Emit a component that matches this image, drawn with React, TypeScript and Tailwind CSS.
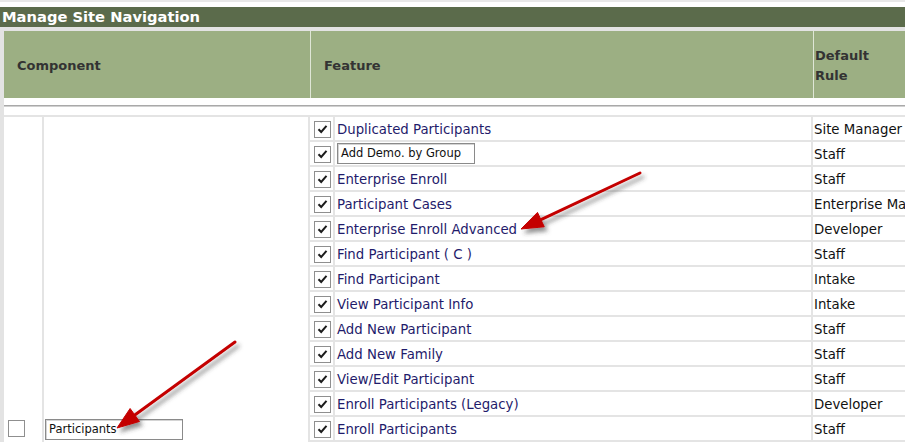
import React from 'react';

type Feature = {
  name: string;
  rule: string;
  editable?: boolean;
};

const features: Feature[] = [
  { name: 'Duplicated Participants', rule: 'Site Manager' },
  { name: 'Add Demo. by Group', rule: 'Staff', editable: true },
  { name: 'Enterprise Enroll', rule: 'Staff' },
  { name: 'Participant Cases', rule: 'Enterprise Manager' },
  { name: 'Enterprise Enroll Advanced', rule: 'Developer' },
  { name: 'Find Participant ( C )', rule: 'Staff' },
  { name: 'Find Participant', rule: 'Intake' },
  { name: 'View Participant Info', rule: 'Intake' },
  { name: 'Add New Participant', rule: 'Staff' },
  { name: 'Add New Family', rule: 'Staff' },
  { name: 'View/Edit Participant', rule: 'Staff' },
  { name: 'Enroll Participants (Legacy)', rule: 'Developer' },
  { name: 'Enroll Participants', rule: 'Staff' },
];

const CheckBox: React.FC<{ checked?: boolean }> = ({ checked }) => (
  <span className="flex h-[17px] w-[17px] shrink-0 items-center justify-center border border-[#8f8f8f] bg-white">
    {checked && (
      <svg width="11" height="10" viewBox="0 0 11 10">
        <path d="M1.5 5.2 L4.2 8 L9.5 1.8" fill="none" stroke="#1c1c1c" strokeWidth="2" />
      </svg>
    )}
  </span>
);

const TextBox: React.FC<{ value: string }> = ({ value }) => (
  <span className="flex h-[21px] w-[138px] shrink-0 items-center border border-[#8a8a8a] bg-white pl-[3px] text-[11.5px] text-[#111] shadow-[inset_1px_1px_0_#d4d4d4]">
    {value}
  </span>
);

// red call-out arrows with a soft shadow, drawn over the table
const Arrows: React.FC = () => (
  <svg className="pointer-events-none absolute left-0 top-0" width="905" height="444">
    <defs>
      <filter id="arrowShadow" x="-20%" y="-20%" width="140%" height="140%">
        <feDropShadow dx="3" dy="4" stdDeviation="2" floodColor="#3a3a3a" floodOpacity="0.55" />
      </filter>
    </defs>
    <g filter="url(#arrowShadow)" fill="#c40000" stroke="#c40000">
      <line x1="640" y1="173" x2="541" y2="219.6" strokeWidth="3" strokeLinecap="round" />
      <polygon points="521,229 544.3,226.8 537.5,212.4" strokeWidth="1" strokeLinejoin="round" />
      <line x1="235" y1="342" x2="134.8" y2="415" strokeWidth="3" strokeLinecap="round" />
      <polygon points="117,428 139.5,421.5 130.1,408.5" strokeWidth="1" strokeLinejoin="round" />
    </g>
  </svg>
);

const App: React.FC = () => {
  return (
    <div className="relative h-[444px] w-[905px] overflow-hidden bg-white font-['DejaVu_Sans',Verdana,sans-serif]">
      <div className="h-[2px] bg-[#e8e8e8]" />
      <div className="h-[5px] bg-white" />

      {/* title bar */}
      <div className="h-[20px] bg-[#5b6b4b] pl-[2px] text-[14.7px] font-bold leading-[20px] text-white">
        Manage Site Navigation
      </div>

      <div className="bg-[#e3e3e3] pl-[4px] pt-[4px]">
        {/* column headers */}
        <div className="flex h-[67px] bg-[#9caf83] text-[13px] font-bold text-[#333]">
          <div className="flex w-[306px] shrink-0 items-center pl-[13px] pt-[2px]">Component</div>
          <div className="flex w-[503px] shrink-0 items-center border-l border-[#dfe6d6] pl-[13px] pt-[2px]">Feature</div>
          <div className="flex min-w-0 flex-1 items-center whitespace-nowrap border-l border-[#dfe6d6] pl-[1px] pt-[2px] leading-[20px]">
            Default
            <br />
            Rule
          </div>
        </div>

        {/* separator strip under the headers */}
        <div className="bg-white">
          <div className="h-[7px]" />
          <div className="h-[1px] bg-[#a9a9a9]" />
          <div className="h-[1px] bg-[#d0d0d0]" />
          <div className="h-[8px]" />
          <div className="h-[2px] bg-[#e4e4e4]" />
        </div>

        {/* body */}
        <div className="flex bg-white">
          <div className="flex w-[40px] shrink-0 items-end border-r-2 border-[#e4e4e4] pb-[5px] pl-[4px]">
            <CheckBox />
          </div>
          <div className="flex w-[266px] shrink-0 items-end border-r-2 border-[#e4e4e4] pb-[2px] pl-[1px]">
            <TextBox value="Participants" />
          </div>
          <div className="flex min-w-0 flex-1 flex-col">
            {features.map((f) => (
              <div key={f.name} className="flex h-[25px] border-b-2 border-[#e4e4e4]">
                <div className="flex w-[25px] shrink-0 items-center border-r-2 border-[#e4e4e4] pl-[4px] pt-[1px]">
                  <CheckBox checked />
                </div>
                <div className="flex w-[478px] shrink-0 items-center border-r-2 border-[#e4e4e4] pl-[2px] text-[13.3px] text-[#1f1b6b]">
                  {f.editable ? <TextBox value={f.name} /> : <span className="pt-[3px]">{f.name}</span>}
                </div>
                <div className="flex min-w-0 flex-1 items-center overflow-hidden whitespace-nowrap pl-[1px] pt-[3px] text-[13.3px] text-[#111]">
                  {f.rule}
                </div>
              </div>
            ))}
          </div>
        </div>
      </div>

      <Arrows />
    </div>
  );
};

export default App;
